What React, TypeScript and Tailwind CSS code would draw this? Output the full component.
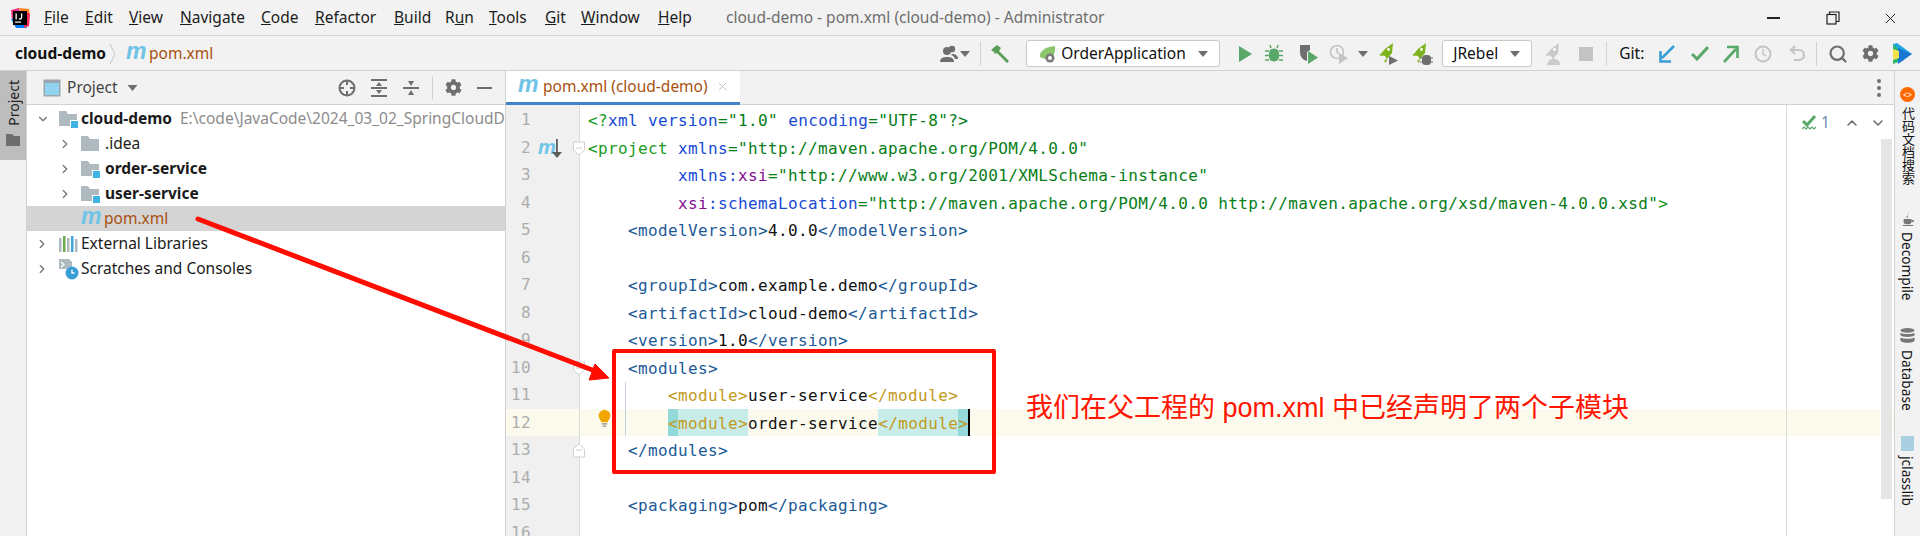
import { ChevronDown, ChevronRight, ChevronUp, Search, X } from 'lucide-react';
import { FaCog } from 'react-icons/fa';

const UI_FONT = "font-['Noto_Sans','Noto_Sans_CJK_SC',sans-serif]";

// ── 메뉴
const MENU = [
  { pre: '', key: 'F', rest: 'ile', w: 'w-[41px]' },
  { pre: '', key: 'E', rest: 'dit', w: 'w-[44px]' },
  { pre: '', key: 'V', rest: 'iew', w: 'w-[51px]' },
  { pre: '', key: 'N', rest: 'avigate', w: 'w-[81px]' },
  { pre: '', key: 'C', rest: 'ode', w: 'w-[54px]' },
  { pre: '', key: 'R', rest: 'efactor', w: 'w-[79px]' },
  { pre: '', key: 'B', rest: 'uild', w: 'w-[51px]' },
  { pre: 'R', key: 'u', rest: 'n', w: 'w-[44px]' },
  { pre: '', key: 'T', rest: 'ools', w: 'w-[56px]' },
  { pre: '', key: 'G', rest: 'it', w: 'w-[36px]' },
  { pre: '', key: 'W', rest: 'indow', w: 'w-[77px]' },
  { pre: '', key: 'H', rest: 'elp', w: 'w-[68px]' },
];

function MavenM({ className = '' }: { className?: string }) {
  return (
    <span className={`font-['Liberation_Sans',sans-serif] font-bold italic leading-none text-[#6ec4e6] ${className}`}>m</span>
  );
}

function IdeaLogo() {
  return (
    <svg className="w-[22px] h-[22px]" viewBox="0 0 22 22">
      <polygon points="2,3 10,1 12,10 3,14" fill="#f5317f" />
      <polygon points="10,1 20,2 21,10 13,8" fill="#fc801d" />
      <polygon points="2,12 7,21 18,21 12,10" fill="#087cfa" />
      <polygon points="15,4 21,7 20,19 15,21" fill="#fe2857" />
      <rect x="4" y="4" width="14" height="14" fill="#000" />
      <rect x="6" y="14.5" width="6" height="1.2" fill="#fff" />
      <rect x="6.5" y="6.5" width="1.3" height="6" fill="#fff" />
      <path d="M10 11.5c1 1 2.6.6 2.6-1V6.5" stroke="#fff" strokeWidth="1.3" fill="none" />
    </svg>
  );
}

function ModuleFolder({ plain = false }: { plain?: boolean }) {
  return (
    <svg className="w-[19px] h-[18px] shrink-0" viewBox="0 0 19 18">
      <path d="M0 1h7l2 3h9v12H0z" fill="#aeb9c0" />
      {!plain && <rect x="11" y="10" width="8" height="8" fill="#fff" />}
      {!plain && <rect x="12" y="11" width="7" height="7" fill="#3fb3e4" />}
    </svg>
  );
}

function ExternalLibs() {
  return (
    <svg className="w-[19px] h-[18px] shrink-0" viewBox="0 0 19 18">
      <rect x="0" y="3" width="2.5" height="14" fill="#aeb9c0" />
      <rect x="4" y="1" width="2.5" height="16" fill="#6aab4f" />
      <rect x="8" y="3" width="2.5" height="14" fill="#aeb9c0" />
      <rect x="12" y="1" width="2.5" height="16" fill="#3fa7dc" />
      <rect x="16" y="4" width="2.5" height="13" fill="#aeb9c0" />
    </svg>
  );
}

function Scratches() {
  return (
    <svg className="w-[20px] h-[22px] shrink-0" viewBox="0 0 20 22">
      <path d="M0 1h10l3 3v7H0z" fill="#aeb9c0" />
      <path d="M2 4l3 2.5L2 9" stroke="#fff" strokeWidth="1.2" fill="none" />
      <circle cx="13" cy="15" r="6.5" fill="#389fd6" />
      <path d="M13 11.5V15h2.5" stroke="#fff" strokeWidth="1.3" fill="none" />
    </svg>
  );
}

function Rocket({ color, children }: { color: string; children?: React.ReactNode }) {
  return (
    <svg className="w-[24px] h-[24px]" viewBox="0 0 24 24">
      <path d="M17 1l-1 10-5 6-2-3-5-1 5-6z" fill={color} />
      <path d="M3 13l4-2-1 3zM8 19l3-3-1 5z" fill={color} />
      <circle cx="12.5" cy="7.5" r="1.4" fill="#fff" />
      {children}
    </svg>
  );
}

function Combo({ className, children }: { className: string; children: React.ReactNode }) {
  return (
    <div className={`h-[27px] flex items-center shrink-0 bg-white border border-[#c9c9c9] rounded-[3px] text-[#111] ${className}`}>
      {children}
    </div>
  );
}

function Caret({ className = '' }: { className?: string }) {
  return (
    <svg className={`w-[10px] h-[6px] ${className}`} viewBox="0 0 10 6">
      <polygon points="0,0 10,0 5,6" fill="#6e6e6e" />
    </svg>
  );
}

function Slot({ className, children }: { className: string; children?: React.ReactNode }) {
  return <div className={`h-[24px] flex items-center justify-center shrink-0 ${className}`}>{children}</div>;
}

function TitleBar() {
  return (
    <div className="h-[36px] pt-[1px] flex items-center bg-[#f2f2f2] border-b border-[#d6d6d6] text-[15.5px] text-[#1c1c1c] shrink-0">
      <div className="w-[44px] pl-[9px] shrink-0"><IdeaLogo /></div>
      {MENU.map((m) => (
        <span key={m.rest} className={`shrink-0 ${m.w}`}>{m.pre}<u>{m.key}</u>{m.rest}</span>
      ))}
      <span className="text-[#6e6e6e] shrink-0">cloud-demo - pom.xml (cloud-demo) - Administrator</span>
      <div className="ml-auto flex items-center">
        <div className="w-[13px] h-[1.5px] bg-[#222]" />
        <svg className="ml-[46px] w-[14px] h-[14px]" viewBox="0 0 14 14" fill="none" stroke="#222" strokeWidth="1.2">
          <rect x="1" y="3.5" width="9" height="9.5" />
          <path d="M3.5 3.5V1H13v9.5h-3" />
        </svg>
        <X className="ml-[42px] mr-[21px] w-[17px] h-[17px] text-[#222]" strokeWidth={1.4} />
      </div>
    </div>
  );
}

function NavBar() {
  return (
    <div className="h-[35px] pt-[1px] flex items-center bg-[#f2f2f2] border-b border-[#d1d1d1] shrink-0 text-[15.5px]">
      <span className="ml-[15px] w-[94px] font-bold text-[#111] shrink-0">cloud-demo</span>
      <svg className="w-[8px] h-[22px] shrink-0" viewBox="0 0 8 22" fill="none" stroke="#c8c8c8"><path d="M1 1l5 10-5 10" /></svg>
      <MavenM className="ml-[9px] w-[23px] text-[23px] -mt-[5px] shrink-0" />
      <span className="text-[#a8500f] shrink-0">pom.xml</span>

      <Slot className="ml-[727px] w-[18px]">
        <svg className="w-[18px] h-[18px]" viewBox="0 0 18 18" fill="#6e6e6e">
          <circle cx="7" cy="6" r="4" />
          <path d="M0 17c0-4 3-5 7-5s7 1 7 5z" />
          <circle cx="12" cy="4" r="3.2" />
          <path d="M12 9c3 0 6 1 6 5h-3c-.5-2-2-3.500-4-4z" />
        </svg>
      </Slot>
      <Slot className="w-[14px]"><Caret /></Slot>
      <Slot className="w-[16px]"><div className="w-px h-[24px] bg-[#d1d1d1]" /></Slot>
      <Slot className="w-[24px]">
        <svg className="w-[20px] h-[20px]" viewBox="0 0 20 20" fill="#5a9e58">
          <path d="M1 6l6-5 4 3-2 3 10 10-2 2L7 9 5 10 4 8z" />
        </svg>
      </Slot>
      <Combo className="ml-[14px] w-[194px] pl-[12px] text-[15.5px]">
        <svg className="w-[18px] h-[18px] shrink-0" viewBox="0 0 18 18">
          <path d="M1 12C0 6 6 2 16 1c1 8-3 14-10 13z" fill="#8dc66c" />
          <circle cx="11" cy="13" r="4.5" fill="#7a7a7a" />
          <circle cx="11" cy="13" r="2" fill="#fff" />
        </svg>
        <span className="ml-[4px]">OrderApplication</span>
        <Caret className="ml-auto mr-[11px]" />
      </Combo>
      <Slot className="ml-[13px] w-[24px]">
        <svg className="w-[13px] h-[16px]" viewBox="0 0 13 16"><polygon points="0,0 13,8 0,16" fill="#59a869" /></svg>
      </Slot>
      <Slot className="ml-[5px] w-[24px]">
        <svg className="w-[18px] h-[18px]" viewBox="0 0 18 18" fill="#59a869" stroke="#59a869">
          <rect x="4.5" y="4" width="9" height="12" rx="4" />
          <path d="M0 6h4M14 6h4M0 10.5h4M14 10.5h4M0 15h4M14 15h4M6 3L5 0M12 3l1-3" strokeWidth="1.5" />
        </svg>
      </Slot>
      <Slot className="ml-[11px] w-[24px]">
        <svg className="w-[20px] h-[20px]" viewBox="0 0 20 20">
          <path d="M1 1h10v5l-3 2v9C4 16 1 13 1 8z" fill="#6e6e6e" />
          <polygon points="9,7 19,13.5 9,20" fill="#59a869" />
        </svg>
      </Slot>
      <Slot className="ml-[6px] w-[24px]">
        <svg className="w-[20px] h-[20px]" viewBox="0 0 20 20" fill="none" stroke="#c4c4c4" strokeWidth="1.6">
          <circle cx="8" cy="8" r="6.5" />
          <path d="M8 4v4l2 2" />
          <polygon points="10,9 19,14 10,20" fill="#c4c4c4" stroke="none" />
        </svg>
      </Slot>
      <Slot className="ml-[5px] w-[14px]"><Caret /></Slot>
      <Slot className="ml-[6px] w-[24px]">
        <Rocket color="#7db31c"><polygon points="13,14 22,18.5 13,23" fill="#6e6e6e" /></Rocket>
      </Slot>
      <Slot className="ml-[9px] w-[24px]">
        <Rocket color="#7db31c"><rect x="13" y="13" width="9" height="10" rx="3.5" fill="#6e6e6e" /><path d="M11 16h13M11 20h13" stroke="#6e6e6e" /></Rocket>
      </Slot>
      <Combo className="ml-[9px] w-[90px] pl-[10px] text-[15.5px]">
        <span>JRebel</span>
        <Caret className="ml-auto mr-[11px]" />
      </Combo>
      <Slot className="ml-[10px] w-[24px]">
        <Rocket color="#cacaca"><path d="M5 23c1-5 4-7 8-6s5 3 5 6z" fill="#cacaca" /></Rocket>
      </Slot>
      <Slot className="ml-[8px] w-[24px]"><div className="w-[14px] h-[14px] bg-[#c4c4c4]" /></Slot>
      <div className="ml-[8px] w-px h-[24px] bg-[#d1d1d1] shrink-0" />
      <span className="ml-[12px] w-[32px] shrink-0 text-[#111]">Git:</span>
      <Slot className="ml-[4px] w-[24px]">
        <svg className="w-[16px] h-[18px]" viewBox="0 0 16 18" fill="none" stroke="#389fd6" strokeWidth="2.6"><path d="M15 1L3 13M1.5 6v10.5H12" /></svg>
      </Slot>
      <Slot className="ml-[9px] w-[24px]">
        <svg className="w-[18px] h-[15px]" viewBox="0 0 18 15" fill="none" stroke="#59a869" strokeWidth="3"><path d="M1 8l5 5L17 1" /></svg>
      </Slot>
      <Slot className="ml-[7px] w-[24px]">
        <svg className="w-[16px] h-[18px]" viewBox="0 0 16 18" fill="none" stroke="#59a869" strokeWidth="2.6"><path d="M1 17L13 4M4 2h10.5v11" /></svg>
      </Slot>
      <Slot className="ml-[8px] w-[24px]">
        <svg className="w-[18px] h-[18px]" viewBox="0 0 18 18" fill="none" stroke="#c4c4c4" strokeWidth="2"><circle cx="9" cy="9" r="7.5" /><path d="M9 4v5l3 2" strokeWidth="1.5" /></svg>
      </Slot>
      <Slot className="ml-[10px] w-[24px]">
        <svg className="w-[16px] h-[17px]" viewBox="0 0 16 17" fill="none" stroke="#c4c4c4" strokeWidth="2.2"><path d="M6 1L2 5l4 4M2 5h8a4.5 4.5 0 010 10H5" /></svg>
      </Slot>
      <div className="ml-[7px] w-px h-[24px] bg-[#d1d1d1] shrink-0" />
      <Slot className="ml-[9px] w-[24px]"><Search className="w-[20px] h-[20px] text-[#6e6e6e]" strokeWidth={2.6} /></Slot>
      <Slot className="ml-[8px] w-[24px]"><FaCog className="w-[17px] h-[17px] text-[#6e6e6e]" /></Slot>
      <Slot className="ml-[8px] w-[24px]">
        <svg className="w-[20px] h-[22px]" viewBox="0 0 20 22">
          <polygon points="1,1 12,5 12,17 1,21" fill="#2bb673" />
          <polygon points="1,1 5,0 20,11 12,12" fill="#22a7e0" />
          <polygon points="6,5 20,11 6,21" fill="#1976d2" />
          <polygon points="1,6 7,8 7,15 1,17" fill="#f3e24b" />
        </svg>
      </Slot>
    </div>
  );
}

function LeftStripe() {
  return (
    <div className="w-[27px] shrink-0 bg-[#f2f2f2] border-r border-[#d1d1d1]">
      <div className="h-[89px] bg-[#bdbdbd] flex flex-col items-center">
        <span className="mt-[9px] [writing-mode:vertical-rl] rotate-180 text-[14px] text-[#222]">Project</span>
        <svg className="mt-[8px] w-[14px] h-[12px]" viewBox="0 0 14 12"><path d="M0 0h6l2 2h6v10H0z" fill="#6e6e6e" /></svg>
      </div>
    </div>
  );
}

function ProjectHeader() {
  return (
    <div className="h-[34px] flex items-center bg-[#f2f2f2] border-b border-[#d1d1d1] shrink-0 text-[15.5px] text-[#444]">
      <svg className="ml-[16px] w-[18px] h-[18px] shrink-0" viewBox="0 0 18 18">
        <rect x="0.5" y="0.5" width="17" height="17" fill="#9aa5ad" />
        <rect x="2" y="4" width="14" height="12" fill="#8fd3ef" />
      </svg>
      <span className="ml-[6px] w-[60px] shrink-0">Project</span>
      <Caret className="w-[11px]" />
      {/* 우측 액션 아이콘 */}
      <svg className="ml-[200px] w-[18px] h-[18px] shrink-0" viewBox="0 0 18 18" fill="none" stroke="#6e6e6e" strokeWidth="2">
        <circle cx="9" cy="9" r="7.5" />
        <path d="M9 1.5V6M9 12v4.5M1.5 9H6M12 9h4.500" />
      </svg>
      <svg className="ml-[15px] w-[16px] h-[18px] shrink-0" viewBox="0 0 16 18" fill="#6e6e6e">
        <rect width="16" height="2" /><rect y="16" width="16" height="2" /><rect y="8" width="16" height="2" />
        <polygon points="8,3 11,7 5,7" /><polygon points="8,15 11,11 5,11" />
      </svg>
      <svg className="ml-[16px] w-[16px] h-[18px] shrink-0" viewBox="0 0 16 18" fill="#6e6e6e">
        <rect y="8" width="16" height="2" />
        <polygon points="8,7 11,2 5,2" /><polygon points="8,11 11,16 5,16" />
      </svg>
      <div className="ml-[13px] w-px h-[24px] bg-[#d1d1d1] shrink-0" />
      <FaCog className="ml-[12px] w-[17px] h-[17px] text-[#6e6e6e] shrink-0" />
      <div className="ml-[15px] w-[15px] h-[2px] bg-[#6e6e6e] shrink-0" />
    </div>
  );
}

function TreeRow({ indent, selected, children }: { indent: string; selected?: boolean; children: React.ReactNode }) {
  return (
    <div className={`h-[25px] flex items-center whitespace-nowrap overflow-hidden ${indent} ${selected ? 'bg-[#d4d4d4]' : ''}`}>
      {children}
    </div>
  );
}

function ProjectPanel() {
  return (
    <div className="w-[479px] shrink-0 flex flex-col bg-white border-r border-[#d1d1d1]">
      <ProjectHeader />
      <div className="pt-[1px] text-[15.5px] text-[#1a1a1a]">
        <TreeRow indent="pl-[9px]">
          <ChevronDown className="w-[14px] h-[14px] text-[#6e6e6e] shrink-0" />
          <span className="w-[9px] shrink-0" />
          <ModuleFolder />
          <span className="ml-[3px] font-bold">cloud-demo</span>
          <span className="ml-[8px] text-[#8c8c8c]">E:\code\JavaCode\2024_03_02_SpringCloudDemo</span>
        </TreeRow>
        <TreeRow indent="pl-[31px]">
          <ChevronRight className="w-[14px] h-[14px] text-[#6e6e6e] shrink-0" />
          <span className="w-[9px] shrink-0" />
          <ModuleFolder plain />
          <span className="ml-[5px]">.idea</span>
        </TreeRow>
        <TreeRow indent="pl-[31px]">
          <ChevronRight className="w-[14px] h-[14px] text-[#6e6e6e] shrink-0" />
          <span className="w-[9px] shrink-0" />
          <ModuleFolder />
          <span className="ml-[5px] font-bold">order-service</span>
        </TreeRow>
        <TreeRow indent="pl-[31px]">
          <ChevronRight className="w-[14px] h-[14px] text-[#6e6e6e] shrink-0" />
          <span className="w-[9px] shrink-0" />
          <ModuleFolder />
          <span className="ml-[5px] font-bold">user-service</span>
        </TreeRow>
        <TreeRow indent="pl-[54px]" selected>
          <MavenM className="w-[23px] text-[23px] -mt-[5px] shrink-0" />
          <span className="text-[#a8500f]">pom.xml</span>
        </TreeRow>
        <TreeRow indent="pl-[8px]">
          <ChevronRight className="w-[14px] h-[14px] text-[#6e6e6e] shrink-0" />
          <span className="w-[10px] shrink-0" />
          <ExternalLibs />
          <span className="ml-[3px]">External Libraries</span>
        </TreeRow>
        <TreeRow indent="pl-[8px]">
          <ChevronRight className="w-[14px] h-[14px] text-[#6e6e6e] shrink-0" />
          <span className="w-[10px] shrink-0" />
          <Scratches />
          <span className="ml-[2px]">Scratches and Consoles</span>
        </TreeRow>
      </div>
    </div>
  );
}

// ── 에디터 코드
const G = 'text-[#1a9a1a]';
const B = 'text-[#174ad4]';
const V = 'text-[#067d17]';
const P = 'text-[#871094]';
const T = 'text-[#1c5a96]';
const Y = 'text-[#c29a1c]';
const K = 'text-[#111]';

type Seg = [string, string, string?];

const LINES: Seg[][] = [
  [['<?', G], ['xml', B], [' ', K], ['version', B], ['="1.0"', V], [' ', K], ['encoding', B], ['="UTF-8"', V], ['?>', V]],
  [['<project', G], [' ', K], ['xmlns', B], ['="http://maven.apache.org/POM/4.0.0"', V]],
  [['         ', K], ['xmlns', B], [':', B], ['xsi', P], ['="http://www.w3.org/2001/XMLSchema-instance"', V]],
  [['         ', K], ['xsi', P], [':', B], ['schemaLocation', B], ['="http://maven.apache.org/POM/4.0.0 http://maven.apache.org/xsd/maven-4.0.0.xsd"', V], ['>', G]],
  [['    ', K], ['<modelVersion>', T], ['4.0.0', K], ['</modelVersion>', T]],
  [],
  [['    ', K], ['<groupId>', T], ['com.example.demo', K], ['</groupId>', T]],
  [['    ', K], ['<artifactId>', T], ['cloud-demo', K], ['</artifactId>', T]],
  [['    ', K], ['<version>', T], ['1.0', K], ['</version>', T]],
  [['    ', K], ['<modules>', T]],
  [['        ', K], ['<module>', Y], ['user-service', K], ['</module>', Y]],
  [
    ['        ', K],
    ['<', Y, 'bg-[#93d9d9]'],
    ['module>', Y, 'bg-[#c8ecea]'],
    ['order-service', K],
    ['</module', Y, 'bg-[#c8ecea]'],
    ['>', Y, 'bg-[#93d9d9]'],
  ],
  [['    ', K], ['</modules>', T]],
  [],
  [['    ', K], ['<packaging>', T], ['pom', K], ['</packaging>', T]],
  [],
];

function FoldMark({ end = false }: { end?: boolean }) {
  return (
    <svg className="absolute right-[-7px] top-[7px] w-[14px] h-[15px]" viewBox="0 0 14 15" fill="#fff" stroke="#d0d0d0">
      {end ? <path d="M1.5 14V6L7 1l5.500 5v8z" /> : <path d="M1.500 1v8L7 14l5.500-5V1z" />}
      <path d="M4 7h6" />
    </svg>
  );
}

function GutterExtra({ line }: { line: number }) {
  if (line === 2) {
    return (
      <>
        <MavenM className="absolute left-[32px] top-[3px] text-[20px]" />
        <svg className="absolute left-[46px] top-[5px] w-[10px] h-[19px]" viewBox="0 0 10 19" fill="#5c5c5c">
          <rect x="4" y="0" width="1.800" height="14" />
          <polygon points="0,13 10,13 5,19" />
        </svg>
        <FoldMark />
      </>
    );
  }
  if (line === 10) return <FoldMark />;
  if (line === 13) return <FoldMark end />;
  return null;
}

function CodeLine({ segs, line }: { segs: Seg[]; line: number }) {
  const current = line === 12;
  return (
    <div className={`h-[27.5px] flex shrink-0 ${current ? 'bg-[#fcfaed]' : ''}`}>
      <div className={`relative w-[74px] shrink-0 border-r border-[#dcdcdc] flex items-center pt-[1px] ${current ? '' : 'bg-[#f0f0f0]'}`}>
        <span className="w-[25px] text-right text-[#adadad]">{line}</span>
        <GutterExtra line={line} />
      </div>
      <div className="pl-[8px] whitespace-pre leading-[29px]">
        {segs.map((s, i) => (
          <span key={i} className={`inline-block align-top h-[27.5px] ${s[1]} ${s[2] ?? ''}`}>{s[0]}</span>
        ))}
        {current && <span className="inline-block align-top w-[2px] h-[27.5px] bg-black" />}
      </div>
    </div>
  );
}

function EditorPanel() {
  return (
    <div className="flex-1 min-w-0 flex flex-col bg-white relative">
      <div className="h-[34px] flex bg-[#f2f2f2] border-b border-[#d1d1d1] shrink-0 text-[15.5px]">
        <div className="w-[234px] h-[34px] flex items-center bg-white border-b-[3px] border-[#4083c9] shrink-0">
          <MavenM className="ml-[12px] w-[25px] text-[23px] -mt-[5px] shrink-0" />
          <span className="text-[#a8500f]">pom.xml (cloud-demo)</span>
          <X className="ml-[8px] w-[13px] h-[13px] text-[#b5b5b5]" strokeWidth={1.5} />
        </div>
        <div className="ml-auto mr-[13px] flex flex-col justify-center gap-[3px] h-[33px]">
          <div className="w-[4px] h-[4px] rounded-full bg-[#6e6e6e]" />
          <div className="w-[4px] h-[4px] rounded-full bg-[#6e6e6e]" />
          <div className="w-[4px] h-[4px] rounded-full bg-[#6e6e6e]" />
        </div>
      </div>
      <div className="flex-1 min-h-0 flex flex-col overflow-hidden font-['DejaVu_Sans_Mono',monospace] text-[16px] tracking-[0.37px]">
        {/* 탭 아래 1px 여백 (거터 색 유지) */}
        <div className="h-[1px] w-[74px] bg-[#f0f0f0] shrink-0" />
        {LINES.map((segs, i) => (
          <CodeLine key={i} segs={segs} line={i + 1} />
        ))}
      </div>

      {/* 들여쓰기 가이드 (modules 블록) */}
      <div className="absolute left-[119px] top-[311px] w-px h-[54px] bg-[#c5d0e0]" />

      {/* 여백선 / 스크롤바 / 인스펙션 위젯 — 코드 위에 겹침 */}
      <div className="absolute left-[1280px] top-[34px] bottom-0 w-px bg-[#dcdcdc]" />
      <div className="absolute left-[1374px] top-[67px] w-[13px] h-[362px] bg-[#e0e0e0]/85 border border-white" />
      <div className="absolute left-[1296px] top-[41px] flex items-center h-[22px]">
        <svg className="w-[15px] h-[16px]" viewBox="0 0 15 16" fill="none" stroke="#59a869">
          <path d="M1 6l4 4 8-9" strokeWidth="3" />
          <path d="M0 14l2-2 2 2 2-2 2 2 2-2 2 2 2-2" strokeWidth="1.200" />
        </svg>
        <span className="ml-[4px] text-[15.5px] text-[#6a8caf] font-['Noto_Sans',sans-serif]">1</span>
        <ChevronUp className="ml-[14px] w-[16px] h-[16px] text-[#6e6e6e]" strokeWidth={2.4} />
        <ChevronDown className="ml-[10px] w-[16px] h-[16px] text-[#6e6e6e]" strokeWidth={2.4} />
      </div>
      {/* 전구 */}
      <svg className="absolute left-[92px] top-[339px] w-[13px] h-[18px]" viewBox="0 0 13 20">
        <path d="M6.500 0C3 0 0 2.500 0 6.500c0 3 2 4 3 7h7c1-3 3-4 3-7C13 2.500 10 0 6.500 0z" fill="#f2a600" />
        <path d="M3.500 15.500h6M4.500 18h4" stroke="#8a8a8a" strokeWidth="1.300" />
      </svg>
    </div>
  );
}

function RightStripe() {
  return (
    <div className="w-[26px] shrink-0 bg-[#f2f2f2] border-l border-[#d1d1d1] flex flex-col items-center text-[13.7px] text-[#111] overflow-hidden">
      <div className="mt-[16px] w-[15px] h-[15px] rounded-full bg-[#ff6a00] flex items-center justify-center shrink-0">
        <span className="text-[8px] leading-none text-white">{'<>'}</span>
      </div>
      <span className="mt-[5px] [writing-mode:vertical-rl] leading-none text-[13px] shrink-0">代码文档搜索</span>
      <svg className="mt-[27px] w-[14px] h-[14px] shrink-0" viewBox="0 0 14 16" fill="#777">
        <path d="M7 0c2 2-2 3 0 6l-1 1c-2-2 2-4 1-7z" />
        <path d="M2 8h9v3c0 2-2 3-4.500 3S2 13 2 11z" />
        <path d="M11 9h2.500v2.500H11zM1 14.800h12V16H1z" />
      </svg>
      <span className="mt-[6px] [writing-mode:vertical-rl] leading-none shrink-0">Decompile</span>
      <svg className="mt-[27px] w-[15px] h-[15px] shrink-0" viewBox="0 0 15 16" fill="#777">
        <ellipse cx="7.500" cy="2.500" rx="7.500" ry="2.500" />
        <path d="M0 5c2 2 13 2 15 0v3c-2 2-13 2-15 0zM0 10c2 2 13 2 15 0v3.500c-2 3-13 3-15 0z" />
      </svg>
      <span className="mt-[7px] [writing-mode:vertical-rl] leading-none shrink-0">Database</span>
      <div className="mt-[26px] w-[13px] h-[15px] bg-[#a9cfe0] shrink-0" />
      <span className="mt-[5px] [writing-mode:vertical-rl] leading-none shrink-0">jclasslib</span>
      <span className="mt-[24px] font-['Liberation_Sans',sans-serif] font-bold italic text-[23px] leading-none text-[#8a8a8a] shrink-0">m</span>
    </div>
  );
}

function Annotations() {
  return (
    <>
      {/* 빨간 화살표 */}
      <svg className="absolute left-0 top-0 w-[1920px] h-[536px] pointer-events-none" viewBox="0 0 1920 536">
        <line x1="198" y1="219" x2="595" y2="371" stroke="#ff0d00" strokeWidth="5" strokeLinecap="round" />
        <polygon points="609,378 595,364 589,380" fill="#ff0d00" stroke="#ff0d00" strokeWidth="1" />
      </svg>
      <div className="absolute left-[612px] top-[349px] w-[384px] h-[125px] border-[4px] border-[#ff0d00] rounded-[2px]" />
      <span className="absolute left-[1026px] top-[390px] text-[27px] leading-[36px] text-[#ff1500] whitespace-nowrap font-['Liberation_Sans','Noto_Sans_CJK_SC',sans-serif]">
        我们在父工程的 pom.xml 中已经声明了两个子模块
      </span>
    </>
  );
}

export default function App() {
  return (
    <div className={`relative w-[1920px] h-[536px] overflow-hidden flex flex-col bg-white ${UI_FONT}`}>
      <TitleBar />
      <NavBar />
      <div className="flex-1 min-h-0 flex">
        <LeftStripe />
        <ProjectPanel />
        <EditorPanel />
        <RightStripe />
      </div>
      <Annotations />
    </div>
  );
}
